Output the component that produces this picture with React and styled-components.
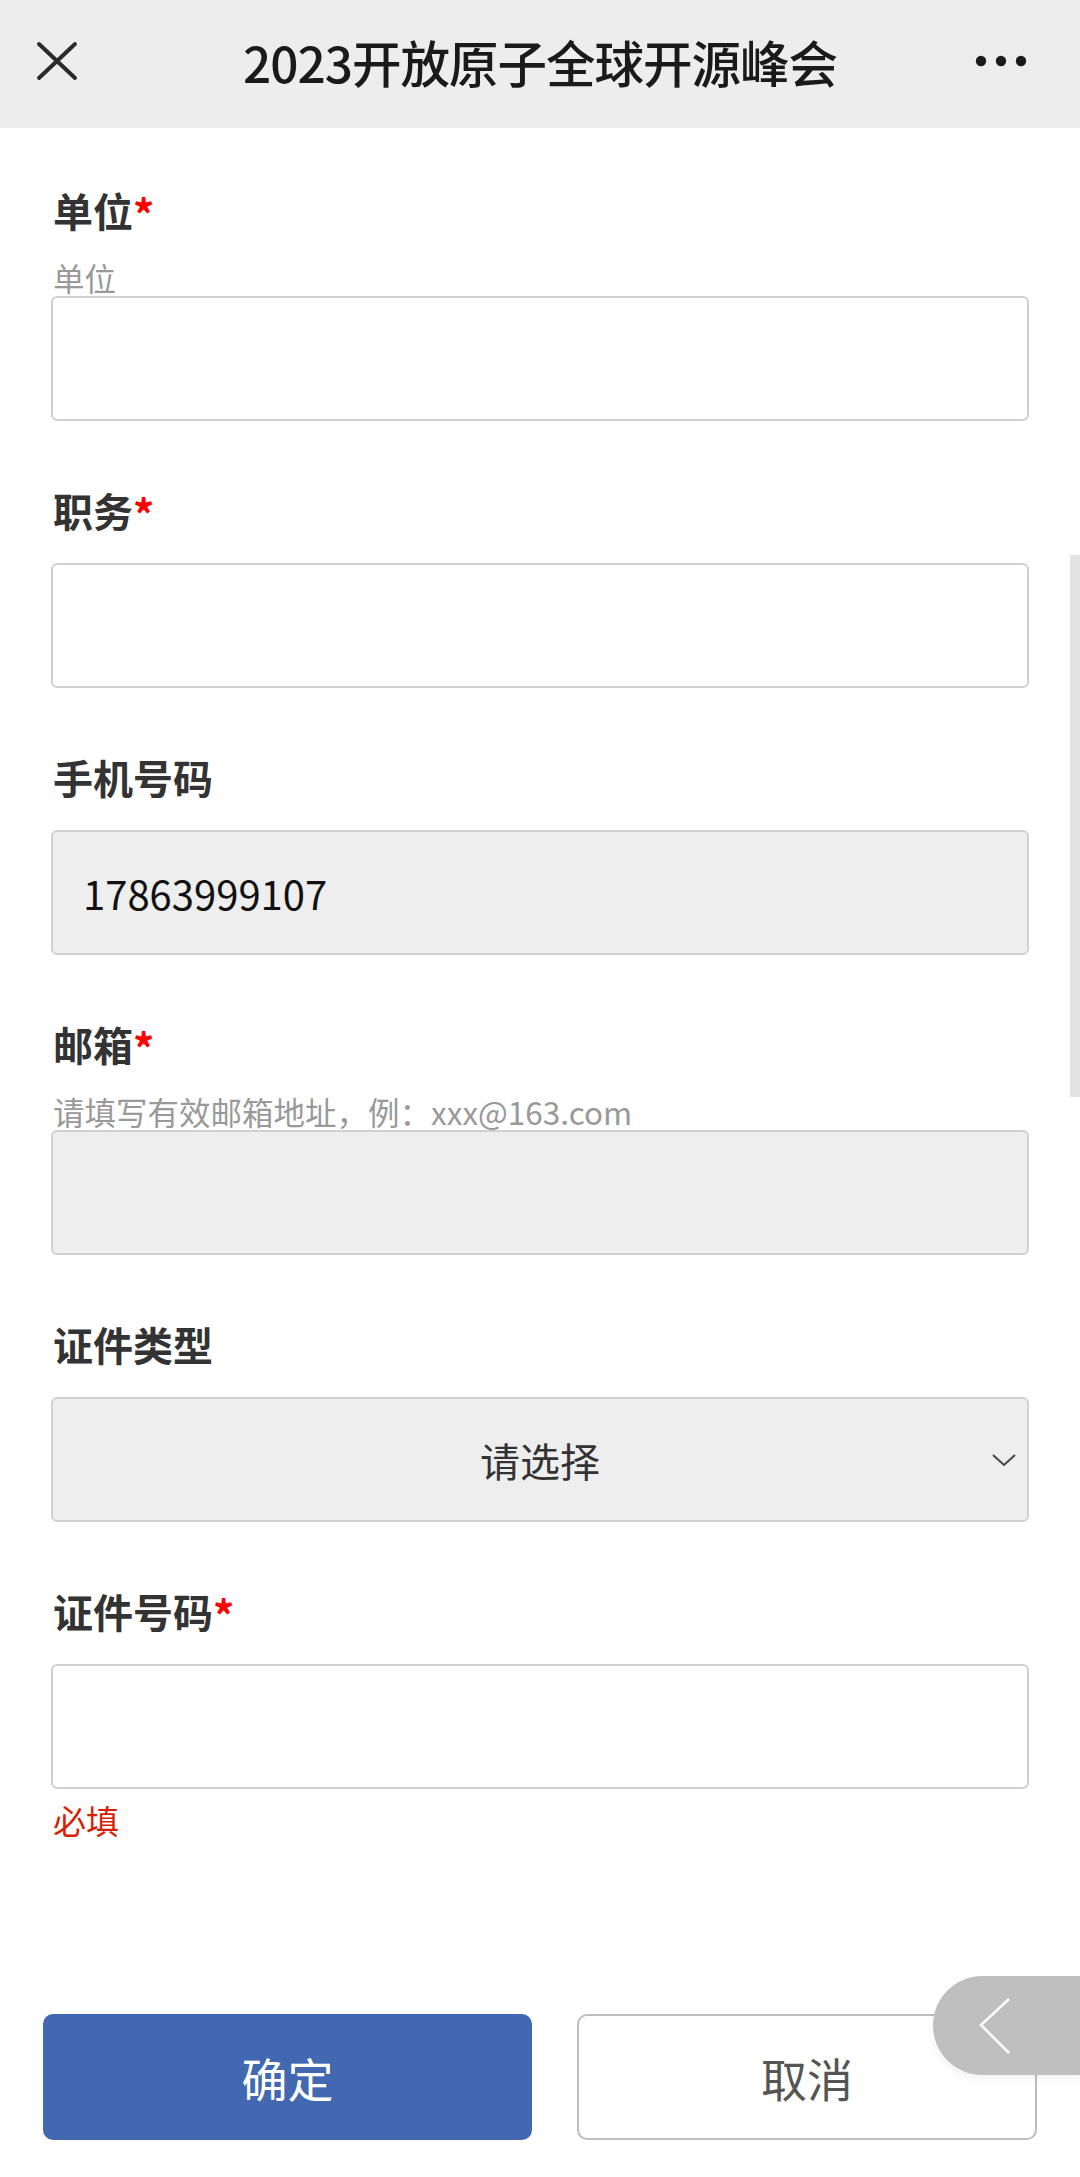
import React from "react";
import styled, { createGlobalStyle } from "styled-components";

const GlobalStyle = createGlobalStyle`
  html, body {
    margin: 0;
    padding: 0;
    background: #fff;
  }
  body {
    font-family: "Noto Sans CJK SC", "Noto Sans", sans-serif;
    color: #333;
  }
  * {
    box-sizing: border-box;
  }
`;

const Page = styled.div`
  position: relative;
  width: 1080px;
  min-height: 2177px;
  overflow: hidden;
`;

const Header = styled.header`
  height: 128px;
  background: #ededed;
  display: grid;
  grid-template-columns: 130px 1fr 130px;
  align-items: center;
  padding-bottom: 6px;
`;

const Title = styled.h1`
  margin: 0;
  text-align: center;
  font-size: 49.5px;
  font-weight: 500;
  color: #1a1a1a;
  letter-spacing: -1px;
  white-space: nowrap;
`;

const IconButton = styled.div`
  display: flex;
  align-items: center;
  justify-content: ${(p) => (p.$right ? "flex-end" : "flex-start")};
  padding: ${(p) => (p.$right ? "0 53px 0 0" : "0 0 0 36px")};
`;

const Form = styled.form`
  padding: 54px 51px 0 51px;
`;

const Field = styled.div`
  margin-bottom: 61px;
  &:last-child {
    margin-bottom: 0;
  }
`;

const Label = styled.div`
  height: 56px;
  font-size: 40px;
  line-height: 56px;
  font-weight: 700;
  color: #333;
  margin-bottom: 25px;
  padding-left: 2px;
`;

const Star = styled.span`
  color: #ff0000;
  font-size: 42px;
  font-weight: 700;
  line-height: 0;
  position: relative;
  top: 4px;
`;

const Hint = styled.div`
  font-size: 31.5px;
  line-height: 38px;
  margin-top: -5px;
  color: #999;
  padding-left: 2px;
`;

const Input = styled.div`
  height: 125px;
  border: 2px solid #d0d0d0;
  border-radius: 6px;
  background: ${(p) => (p.$disabled ? "#eeeeee" : "#ffffff")};
  display: flex;
  align-items: center;
  padding: 0 30px;
  font-size: 40px;
  color: #111;
`;

const Select = styled(Input)`
  position: relative;
  justify-content: center;
  color: #333;
`;

const Chevron = styled.svg`
  position: absolute;
  right: 10px;
  top: 50%;
  margin-top: -8px;
`;

const Error = styled.div`
  margin-top: 11px;
  font-size: 33px;
  line-height: 40px;
  color: #d81e06;
  padding-left: 2px;
`;

const Buttons = styled.div`
  display: flex;
  gap: 45px;
  padding: 174px 0 37px 43px;
`;

const Button = styled.div`
  height: 126px;
  width: ${(p) => p.$w}px;
  border-radius: 10px;
  display: flex;
  align-items: center;
  justify-content: center;
  font-size: 46px;
  background: ${(p) => (p.$primary ? "#4268b1" : "#fff")};
  color: ${(p) => (p.$primary ? "#fff" : "#555")};
  border: 2px solid ${(p) => (p.$primary ? "#4268b1" : "#bdbdbd")};
`;

const BackTab = styled.div`
  position: absolute;
  right: 0;
  top: 1976px;
  width: 147px;
  height: 99px;
  border-radius: 50px 0 0 50px;
  background: #bfbfbf;
  box-shadow: 0 4px 10px rgba(0, 0, 0, 0.06);
  display: flex;
  align-items: center;
  padding-left: 46px;
`;

const Scrollbar = styled.div`
  position: absolute;
  right: 0;
  top: 555px;
  width: 10px;
  height: 542px;
  background: #e3e3e3;
`;

const fields = [
  { label: "单位", required: true, hint: "单位" },
  { label: "职务", required: true },
  { label: "手机号码", value: "17863999107", disabled: true },
  {
    label: "邮箱",
    required: true,
    hint: "请填写有效邮箱地址，例：xxx@163.com",
    disabled: true,
  },
  { label: "证件类型", select: true },
  { label: "证件号码", required: true, error: "必填" },
];

export default function App() {
  return (
    <Page>
      <GlobalStyle />
      <Header>
        <IconButton>
          <svg width="42" height="40" viewBox="0 0 42 40">
            <path
              d="M3 3 L39 37 M39 3 L3 37"
              stroke="#2b2b2b"
              strokeWidth="4"
              strokeLinecap="round"
            />
          </svg>
        </IconButton>
        <Title>2023开放原子全球开源峰会</Title>
        <IconButton $right>
          <svg width="52" height="12" viewBox="0 0 52 12">
            <circle cx="6" cy="6" r="5.2" fill="#1a1a1a" />
            <circle cx="26" cy="6" r="5.2" fill="#1a1a1a" />
            <circle cx="46" cy="6" r="5.2" fill="#1a1a1a" />
          </svg>
        </IconButton>
      </Header>

      <Form>
        {fields.map((f) => (
          <Field key={f.label}>
            <Label>
              {f.label}
              {f.required && <Star>*</Star>}
            </Label>
            {f.hint && <Hint>{f.hint}</Hint>}
            {f.select ? (
              <Select $disabled>
                请选择
                <Chevron width="26" height="16" viewBox="0 0 26 16">
                  <path
                    d="M2 3 L13 13 L24 3"
                    fill="none"
                    stroke="#444"
                    strokeWidth="2"
                  />
                </Chevron>
              </Select>
            ) : (
              <Input $disabled={f.disabled}>{f.value}</Input>
            )}
            {f.error && <Error>{f.error}</Error>}
          </Field>
        ))}
      </Form>

      <Buttons>
        <Button $primary $w={489}>确定</Button>
        <Button $w={460}>取消</Button>
      </Buttons>

      <BackTab>
        <svg width="32" height="58" viewBox="0 0 32 58">
          <path
            d="M30 2 L2 28 L30 56"
            fill="none"
            stroke="#fff"
            strokeWidth="2.5"
          />
        </svg>
      </BackTab>
      <Scrollbar />
    </Page>
  );
}
